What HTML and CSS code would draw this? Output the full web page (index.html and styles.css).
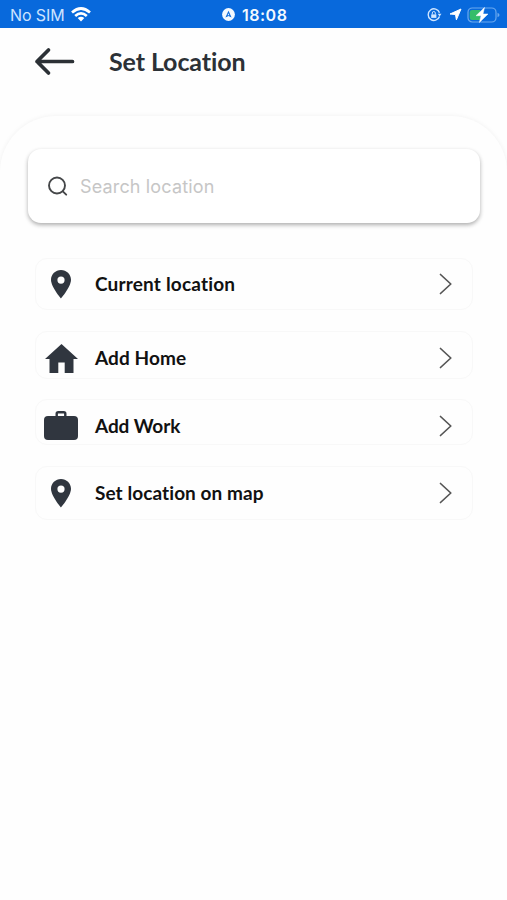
FILE: index.html
```html
<!DOCTYPE html>
<html lang="en">
<head>
<meta charset="utf-8">
<title>Set Location</title>
<link rel="stylesheet" href="styles.css">
</head>
<body>
<div class="status">
  <div class="status-left"><span class="carrier">No SIM</span>
    <svg width="20" height="15" viewBox="0 0 20 15" fill="none" stroke="#fff" stroke-width="2.7"><path d="M1 5.4Q10-2.4 19 5.4M4.2 9Q10 3.8 15.8 9"/><path d="M6.7 11.1Q10 8.2 13.3 11.1L10 14.6z" fill="#fff" stroke="none"/></svg>
  </div>
  <div class="status-mid">
    <svg width="13" height="13" viewBox="0 0 13 13"><circle cx="6.5" cy="6.5" r="6.4" fill="#f2f9ff"/><path d="M6.5 2.7 9.6 9.6 6.5 8.1 3.4 9.6z" fill="#0869dc"/><path d="M6.5 5.2 7.4 7.2H5.6z" fill="#f2f9ff"/></svg>
    <span class="time">18:08</span>
  </div>
  <div class="status-right">
    <svg width="15" height="14" viewBox="0 0 15 14" fill="none" stroke="#cfe5ff" stroke-width="1.4"><path d="M12.5 8.5A5.8 5.8 0 1 1 12.5 4.8"/><path d="M10.7 5.8h3.8l-1.9 2.8z" fill="#cfe5ff" stroke="none"/><path d="M4.2 6.4h5.2v3.5H4.2z" fill="#cfe5ff" stroke="none"/><path d="M5.3 6.5V5a1.5 1.5 0 0 1 3 0v1.5" stroke-width="1"/></svg>
    <svg class="nav" width="13" height="13" viewBox="0 0 13 13"><path d="M12 1 7.400 11.800 6.500 6.500 1 6z" fill="#fff" stroke="#fff" stroke-linejoin="round"/></svg>
    <svg width="33" height="18" viewBox="0 0 33 18"><rect x="1" y="2" width="28" height="14" rx="4.3" fill="none" stroke="#6ba9ef" stroke-width="1.2"/><path d="M5 4h8v10H5a2.3 2.3 0 0 1-2.300-2.300V6.300A2.300 2.300 0 0 1 5 4z" fill="#35bd6a"/><path d="M30.500 6.700q2 .7 2 2.300t-2 2.300z" fill="#6ba9ef"/><path d="M17.500 1.500 9 9.700h5L12.400 16.500 21 8h-5z" fill="#fff" stroke="#fff" stroke-width=".5"/></svg>
  </div>
</div>
<header class="header">
  <svg width="42" height="30" viewBox="0 0 42 30" fill="none" stroke="#2c3136" stroke-width="3.700" stroke-linecap="round" stroke-linejoin="round"><path d="M38.500 14.500H3M14.500 3 3 14.500 14.500 26"/></svg>
  <h1 class="title">Set Location</h1>
</header>
<main class="sheet">
  <div class="search">
    <svg width="22" height="22" viewBox="0 0 22 22" fill="none" stroke="#454749" stroke-width="1.900" stroke-linecap="round"><circle cx="10" cy="10.500" r="8"/><path d="m15.800 16.300 3.400 3.400"/></svg>
    <span class="hint">Search location</span>
  </div>
  <div class="row current">
    <span class="icon"><svg width="20" height="29" viewBox="0 0 20 29"><path fill="#30363f" fill-rule="evenodd" d="M10 0C4.500 0 0 4.300 0 9.800 0 17 10 28.500 10 28.500S20 17 20 9.800C20 4.300 15.500 0 10 0zm0 6.500a3.600 3.600 0 1 1 0 7.200 3.600 3.600 0 0 1 0-7.200z"/></svg></span>
    <span class="label current-label">Current location</span>
    <svg class="chevron" width="14" height="22" viewBox="0 0 14 22"><path d="m1.500 1.500 10.300 9.500L1.500 20.500"/></svg>
  </div>
  <div class="row home">
    <span class="icon"><svg width="33" height="29" viewBox="0 0 33 29"><path fill="#30363f" d="M16.500 0 33 15h-4.500v14h-8.800V18.500h-6.400V29H4.500V15H0z"/></svg></span>
    <span class="label">Add Home</span>
    <svg class="chevron" width="14" height="22" viewBox="0 0 14 22"><path d="m1.500 1.500 10.300 9.500L1.500 20.500"/></svg>
  </div>
  <div class="row work">
    <span class="icon"><svg width="34" height="29" viewBox="0 0 34 29"><rect y="5" width="34" height="24" rx="4" fill="#30363f"/><path d="M12.700 6V2.800q0-1.500 1.500-1.500h5.600q1.500 0 1.500 1.500V6" fill="none" stroke="#30363f" stroke-width="2.400"/></svg></span>
    <span class="label work-label">Add Work</span>
    <svg class="chevron" width="14" height="22" viewBox="0 0 14 22"><path d="m1.500 1.500 10.300 9.500L1.500 20.500"/></svg>
  </div>
  <div class="row map">
    <span class="icon"><svg width="20" height="29" viewBox="0 0 20 29"><path fill="#30363f" fill-rule="evenodd" d="M10 0C4.500 0 0 4.300 0 9.800 0 17 10 28.500 10 28.500S20 17 20 9.800C20 4.300 15.500 0 10 0zm0 6.500a3.600 3.600 0 1 1 0 7.200 3.600 3.600 0 0 1 0-7.200z"/></svg></span>
    <span class="label">Set location on map</span>
    <svg class="chevron" width="14" height="22" viewBox="0 0 14 22"><path d="m1.500 1.500 10.300 9.500L1.500 20.500"/></svg>
  </div>
</main>
</body>
</html>
```
FILE: styles.css
```css
* { box-sizing: border-box; }
body { margin: 0; height: 900px; overflow: hidden; display: flex; flex-direction: column; background: #fefefe; font-family: Lato, sans-serif; font-variant-ligatures: none; }
svg { display: block; flex: none; }
.status { flex: none; height: 28px; display: grid; grid-template-columns: 222px 1fr 80px; align-items: center; padding-top: 1px; background: #0869dc; color: #f2f9ff; font-family: Inter, sans-serif; white-space: nowrap; }
.status-left { display: flex; align-items: center; gap: 7px; padding-left: 10px; color: #cce3ff; }
.carrier { font-size: 16px; line-height: 20px; width: 54px; letter-spacing: -0.1px; }
.status-mid { display: flex; align-items: center; gap: 7px; }
.time { font-size: 16px; line-height: 20px; font-weight: 600; letter-spacing: 0.5px; }
.status-right { display: flex; align-items: center; }
.nav { margin: 0 5px 0 7px; }
.header { flex: none; height: 88px; display: flex; align-items: flex-start; padding: 18px 0 0 34px; }
.header svg { margin-top: 1px; }
.title { margin: 0 0 0 33px; font-size: 25px; line-height: 30px; font-weight: 700; letter-spacing: -0.1px; color: #2c3136; }
.sheet { flex: 1; border-radius: 56px 56px 0 0; background: #fefefe; box-shadow: 0 0 5px rgba(0,0,0,.06); padding: 33px 34px 0 35px; display: flex; flex-direction: column; }
.search { height: 74px; margin: 0 -7px 35px -7px; border-radius: 13px; background: #fff; box-shadow: 0 2px 4px rgba(0,0,0,.32); display: flex; align-items: center; padding-left: 19px; gap: 11px; }
.hint { font-family: Inter, sans-serif; font-size: 18px; letter-spacing: 0.15px; color: #c6c6c6; }
.row { display: flex; align-items: center; border: 1px solid #f8f8f8; border-radius: 12px; padding-right: 19px; }
.current { height: 52px; margin-bottom: 21px; }
.home { height: 48px; margin-bottom: 20px; padding-top: 6px; }
.work { height: 46px; margin-bottom: 21px; padding-top: 7px; }
.map { height: 54px; }
.icon { width: 50px; display: flex; justify-content: center; }
.label { flex: 1; margin-left: 9px; font-size: 19px; line-height: 24px; font-weight: 700; letter-spacing: 0.08px; color: #111; }
.current-label { letter-spacing: 0.18px; }
.work-label { letter-spacing: -0.1px; }
.chevron { fill: none; stroke: #555; stroke-width: 1.7; stroke-linecap: round; stroke-linejoin: round; }
```
